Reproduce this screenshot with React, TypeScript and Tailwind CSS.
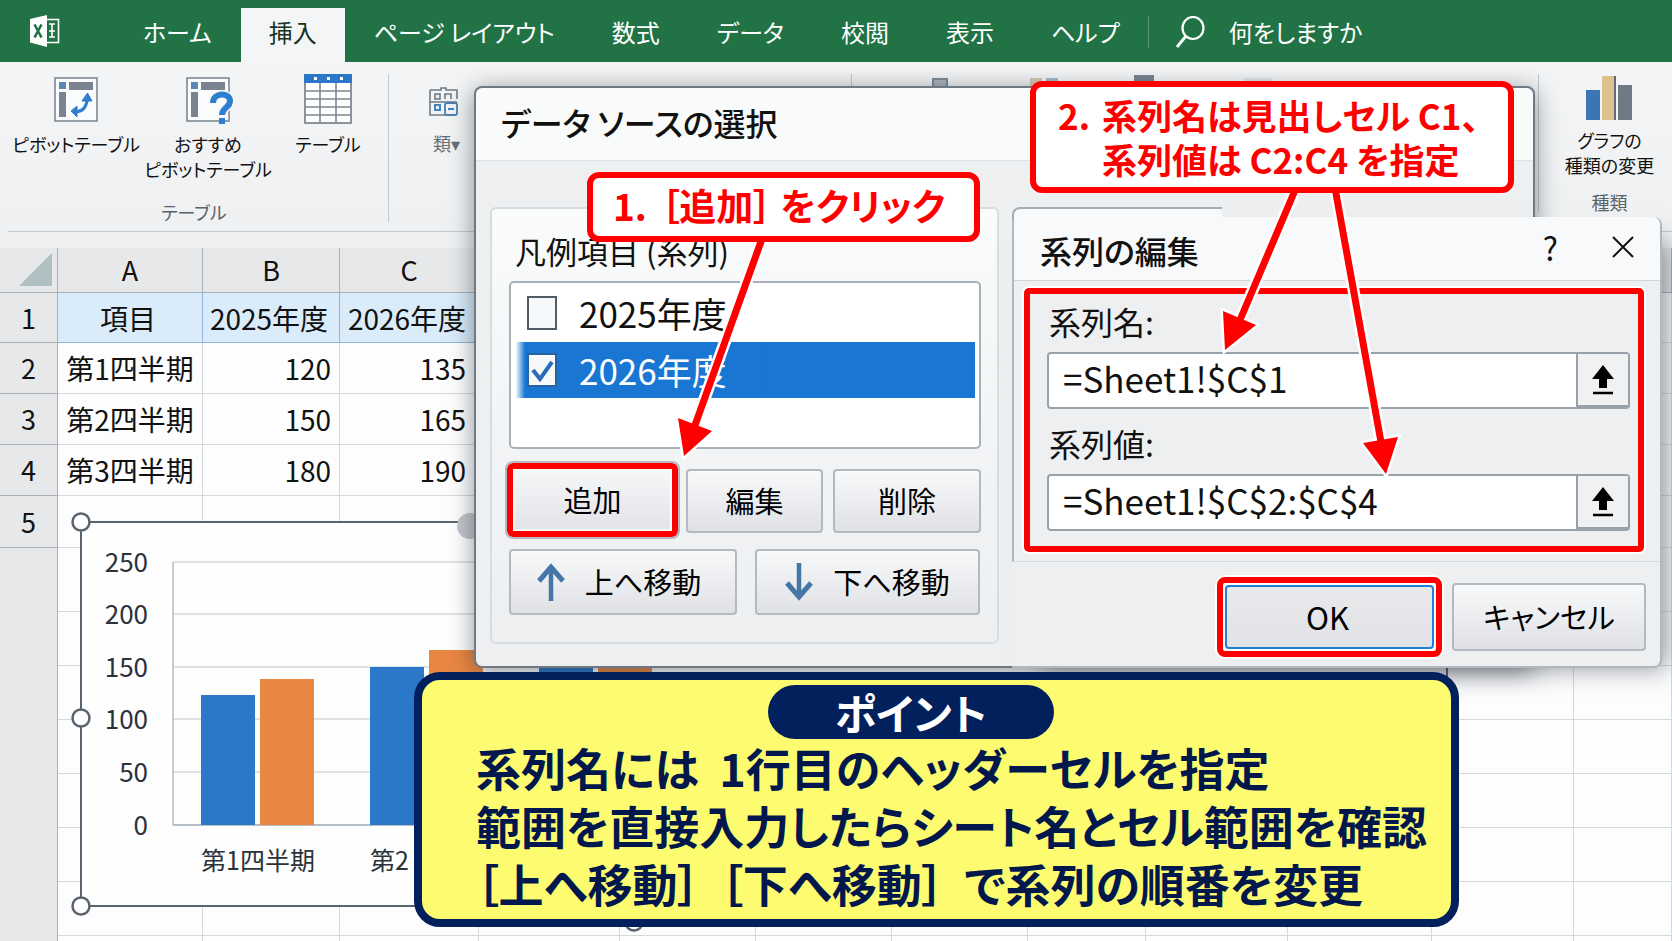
import { clsx } from "clsx";
import type { ReactNode } from "react";

const tabs = [
  "ホーム",
  "挿入",
  "ページ レイアウト",
  "数式",
  "データ",
  "校閲",
  "表示",
  "ヘルプ",
];

const columns = ["A", "B", "C", "", "", "", "", "", "", "", "", ""];

const rows = [
  ["第1四半期", "120", "135"],
  ["第2四半期", "150", "165"],
  ["第3四半期", "180", "190"],
];

const axisTicks = [
  { value: 250, y: 40 },
  { value: 200, y: 92 },
  { value: 150, y: 145 },
  { value: 100, y: 197 },
  { value: 50, y: 250 },
  { value: 0, y: 303 },
];

const clusters = [
  { label: "第1四半期", x: 120, first: 130, second: 146 },
  { label: "第2", x: 289, first: 158, second: 175 },
  { label: "", x: 458, first: 190, second: 200 },
];

function AppLogo() {
  return (
    <svg width="30" height="32" viewBox="0 0 30 32" aria-hidden="true">
      <path d="M16 4.500H28.500V27.500H16" fill="none" stroke="#fff" strokeWidth="1.600" />
      <path d="M19 9h6M19 16h6M19 22h6M22 9v13" stroke="#fff" strokeWidth="1.600" />
      <path d="M0 4L17 0V32L0 27.500Z" fill="#fff" />
      <path d="M4.500 9.500L11.500 22.500M11.500 9.500L4.500 22.500" stroke="#217346" strokeWidth="2.600" />
    </svg>
  );
}

function SearchGlyph() {
  return (
    <svg width="30" height="32" viewBox="0 0 30 32" fill="none" stroke="#fff" aria-hidden="true">
      <ellipse cx="18" cy="12" rx="10.500" ry="11" strokeWidth="2.200" />
      <path d="M11 20L2 31" strokeWidth="2.800" />
    </svg>
  );
}

function PivotFrame({ children }: { children: ReactNode }) {
  return (
    <svg width="52" height="50" viewBox="0 0 52 50" fill="none" aria-hidden="true">
      <rect x="5" y="4" width="42" height="43" fill="#fbfcfd" stroke="#7d8794" strokeWidth="1.600" />
      <rect x="9" y="8" width="7" height="7" fill="#5b86b5" />
      <rect x="19" y="8" width="24" height="8" fill="#7b8290" />
      <rect x="9" y="18" width="7" height="25" fill="#7b8290" />
      {children}
    </svg>
  );
}

function PivotIcon() {
  return (
    <PivotFrame>
      <path d="M25 38C34 37 36 33 37.500 25" stroke="#2f7fd0" strokeWidth="3.200" />
      <path d="M37.500 19L42 27H32ZM21 37L27 32V43Z" fill="#2f7fd0" stroke="#2f7fd0" strokeLinejoin="round" />
    </PivotFrame>
  );
}

function RecommendedPivotIcon() {
  return (
    <PivotFrame>
      <path
        d="M31 29C31 18 48 18 48 27C48 34 40 33 40 41"
        stroke="#f5f6f8"
        strokeWidth="9"
      />
      <path d="M31 29C31 18 48 18 48 27C48 34 40 33 40 41" stroke="#2f7fd0" strokeWidth="6" />
      <rect x="37" y="44" width="6" height="6" fill="#2f7fd0" />
    </PivotFrame>
  );
}

function TableIcon() {
  return (
    <svg width="52" height="50" viewBox="0 0 52 50" aria-hidden="true">
      <rect x="3" y="1" width="46" height="48" fill="#fff" stroke="#6f7b89" strokeWidth="1.600" />
      <path
        d="M3 17h46M3 25h46M3 33h46M3 41h46M18 9v40M34 9v40"
        stroke="#7d8896"
        strokeWidth="1.600"
      />
      <rect x="2" y="0" width="48" height="9" fill="#2b78c8" />
      <path d="M12 4.500h3M25 4.500h3M38 4.500h3" stroke="#fff" strokeWidth="3" />
    </svg>
  );
}

function AddInIcon() {
  return (
    <svg
      width="30"
      height="32"
      viewBox="0 0 30 32"
      fill="none"
      stroke="#6f7b89"
      className="shrink-0"
      aria-hidden="true"
    >
      <path d="M1 4H12V2H17V4H28V13M1 4V29H17M1 16H28" strokeWidth="1.600" />
      <rect x="6" y="8" width="5" height="5" strokeWidth="1.600" />
      <path d="M16 13V8H22V13" strokeWidth="1.600" />
      <rect x="6" y="19" width="5" height="5" stroke="#3e86c6" strokeWidth="2" />
      <rect x="16" y="17" width="12" height="12" rx="2" stroke="#4d7fae" strokeWidth="1.800" />
      <path d="M19 23h6" stroke="#3e86c6" strokeWidth="2" />
    </svg>
  );
}

function ChartTypeIcon() {
  return (
    <svg width="46" height="44" viewBox="0 0 46 44" aria-hidden="true">
      <rect x="0" y="14" width="14" height="30" fill="#3a76b4" />
      <rect x="16" y="0" width="13" height="44" fill="#dfc18f" />
      <rect x="28" y="0" width="2" height="44" fill="#5f6a76" />
      <rect x="32" y="9" width="14" height="35" fill="#6e7a86" />
    </svg>
  );
}

function ArrowGlyph({ down = false }: { down?: boolean }) {
  return (
    <svg width="28" height="38" viewBox="0 0 28 38" fill="none" stroke="#4477a6" aria-hidden="true">
      <path d={down ? "M14 0V34" : "M14 38V4"} strokeWidth="4.500" />
      <path d={down ? "M2 20L14 34L26 20" : "M2 18L14 4L26 18"} strokeWidth="5" />
    </svg>
  );
}

function RibbonItem({
  icon,
  lines,
  className,
}: {
  icon: ReactNode;
  lines: string[];
  className?: string;
}) {
  return (
    <button
      type="button"
      className={clsx("flex flex-col items-center gap-2 whitespace-nowrap leading-[25px]", className)}
    >
      {icon}
      <span>
        {lines.map((line) => (
          <span key={line} className="block">
            {line}
          </span>
        ))}
      </span>
    </button>
  );
}

function Ribbon() {
  return (
    <section className="flex h-[186px] flex-col bg-linear-to-b from-[#f4f5f6] to-[#eef0f1] pb-4 text-[18px] text-[#111]">
      <div className="ml-2 flex flex-1 border-b border-[#c3c8cd] pt-3">
        <div className="flex h-[148px] w-[381px] flex-col border-r border-[#c3c8cd]">
          <div className="flex items-start">
            <RibbonItem icon={<PivotIcon />} lines={["ピボットテーブル"]} className="w-[136px]" />
            <RibbonItem
              icon={<RecommendedPivotIcon />}
              lines={["おすすめ", "ピボットテーブル"]}
              className="w-[128px]"
            />
            <RibbonItem icon={<TableIcon />} lines={["テーブル"]} className="w-[112px]" />
          </div>
          <p className="mt-auto pr-2 text-center leading-5 text-[#5b616a]">テーブル</p>
        </div>
        <div className="flex h-3 flex-1 pl-10">
          <div className="flex w-8 flex-col gap-3 pt-3 text-[#666d76]">
            <AddInIcon />
            <span className="pl-1 whitespace-nowrap">類▾</span>
          </div>
          <div className="ml-[390px] h-16 w-px bg-[#c3c8cd]" />
          <div className="ml-20 mt-1 h-8 w-4 border-2 border-[#7f8b97] bg-[#aab4bd]" />
          <div className="ml-[82px] mt-1 h-8 w-3 bg-[#d6c7b4]" />
          <div className="ml-1 mt-1 h-8 w-3 bg-[#a7b7c4]" />
          <div className="ml-[76px] mt-px h-8 w-5 bg-[#77838f]" />
          <div className="ml-[90px] mt-1 h-8 w-7 bg-[#dfe3e7]" />
        </div>
        <div className="flex h-[138px] w-[134px] flex-col items-center border-l border-[#c3c8cd] pl-2">
          <RibbonItem
            icon={<ChartTypeIcon />}
            lines={["グラフの", "種類の変更"]}
            className="pt-0.5"
          />
          <p className="mt-auto leading-5 text-[#5b616a]">種類</p>
        </div>
      </div>
    </section>
  );
}

function TabBar() {
  return (
    <header className="flex h-[62px] items-end bg-[#217346] text-[24px] text-white">
      <div className="flex h-full w-[115px] items-center pl-[30px]">
        <AppLogo />
      </div>
      <nav className="flex gap-px">
        {tabs.map((tab) => (
          <button
            key={tab}
            type="button"
            className={clsx(
              "h-[54px] whitespace-nowrap px-7 pb-1.5",
              tab === "挿入" && "bg-[#f4f5f6] text-[#17331f]",
            )}
          >
            {tab}
          </button>
        ))}
      </nav>
      <button
        type="button"
        className="mb-3.5 flex h-8 items-center gap-6 whitespace-nowrap border-l border-[#5d9a78] pl-[26px]"
      >
        <SearchGlyph />
        何をしますか
      </button>
    </header>
  );
}

function Sheet() {
  const headCell = "border-b border-r border-[#a9b0b8] bg-[#e6e8ea] text-[27px] font-normal";
  const cell = "border-b border-r border-[#d5d9de]";

  return (
    <table className="w-full table-fixed border-separate border-spacing-0 bg-[#fdfdfe] text-[28px] leading-9 text-[#111]">
      <colgroup>
        <col className="w-[58px]" />
        <col className="w-[145px]" />
        <col className="w-[137px]" />
        <col className="w-[139px]" />
        <col className="w-[141px]" />
        <col className="w-[136px]" />
        <col className="w-[136px]" />
        <col className="w-[136px]" />
        <col className="w-[118px]" />
        <col className="w-[142px]" />
        <col className="w-[144px]" />
        <col className="w-[142px]" />
        <col />
      </colgroup>
      <thead>
        <tr className="h-[45px]">
          <th className={headCell}>
            <svg width="34" height="34" viewBox="0 0 34 34" className="ml-auto mr-1" aria-hidden="true">
              <path d="M33 0V33H0Z" fill="#b0bfc1" />
            </svg>
          </th>
          {columns.map((name, i) => (
            <th key={i} scope="col" className={headCell}>
              {name}
            </th>
          ))}
        </tr>
      </thead>
      <tbody>
        <tr className="h-[50px]">
          <th scope="row" className={headCell}>
            1
          </th>
          {["項目", "2025年度", "2026年度"].map((name) => (
            <td
              key={name}
              className="border-b border-r border-[#8fb4da] bg-[#daebf9] pr-1 text-center whitespace-nowrap"
            >
              {name}
            </td>
          ))}
          {columns.slice(3).map((_, i) => (
            <td key={i} className={cell} />
          ))}
        </tr>
        {rows.map(([label, previous, current], i) => (
          <tr key={label} className="h-[51px]">
            <th scope="row" className={headCell}>
              {i + 2}
            </th>
            <td className={clsx(cell, "whitespace-nowrap text-center")}>{label}</td>
            <td className={clsx(cell, "pr-2 text-right")}>{previous}</td>
            <td className={clsx(cell, "pr-3 text-right")}>{current}</td>
            {columns.slice(3).map((_, j) => (
              <td key={j} className={cell} />
            ))}
          </tr>
        ))}
        <tr className="h-[52px]">
          <th scope="row" className={headCell}>
            5
          </th>
          {columns.map((_, i) => (
            <td key={i} className={cell} />
          ))}
        </tr>
        <tr className="h-[64px]">
          <th className="border-r border-[#a9b0b8] bg-[#e6e8ea]" />
          {columns.map((_, i) => (
            <td key={i} className={cell} />
          ))}
        </tr>
        {[7, 8, 9, 10, 11, 12, 13].map((row) => (
          <tr key={row} className="h-[54px]">
            <th className="border-r border-[#a9b0b8] bg-[#e6e8ea]" />
            {columns.map((_, i) => (
              <td key={i} className={cell} />
            ))}
          </tr>
        ))}
      </tbody>
    </table>
  );
}

function EmbeddedChart() {
  return (
    <svg
      width="1370"
      height="420"
      viewBox="0 0 1370 420"
      className="absolute left-[81px] top-[522px] overflow-visible text-[26px]"
      fill="#2b323c"
      role="img"
      aria-label="四半期別の集合縦棒グラフ"
    >
      <rect x="0" y="0" width="1366" height="384" fill="#fefefe" stroke="#5a646f" strokeWidth="2" />
      {axisTicks.map((tick) => (
        <g key={tick.value}>
          <path
            d={`M92 ${tick.y}H1340`}
            stroke={tick.value === 0 ? "#b4bcc6" : "#d3d8de"}
            strokeWidth={tick.value === 0 ? 2 : 1.5}
          />
          <text x="67" y={tick.y + 10} textAnchor="end">
            {tick.value}
          </text>
        </g>
      ))}
      <path d="M92 40V303" stroke="#b4bcc6" strokeWidth="1.500" />
      {clusters.map((c) => (
        <g key={c.x}>
          <rect x={c.x} y={303 - c.first} width="54" height={c.first} fill="#2b78c8" />
          <rect x={c.x + 59} y={303 - c.second} width="54" height={c.second} fill="#ea8643" />
          <text x={c.x} y="348" fontSize="25">
            {c.label}
          </text>
        </g>
      ))}
      <circle cx="389" cy="4" r="13" fill="#c3c7cc" />
      <g fill="#fff" stroke="#5a646f" strokeWidth="2.500">
        <circle cx="0" cy="0" r="8.500" />
        <circle cx="0" cy="196" r="8.500" />
        <circle cx="0" cy="384" r="8.500" />
        <circle cx="553" cy="400" r="8.500" />
      </g>
    </svg>
  );
}

const dialogButton =
  "rounded-[4px] border-2 border-[#b3b9c0] bg-linear-to-b from-[#f8f9fa] to-[#dfe1e5] text-[29px] text-black";

function SelectDataDialog() {
  return (
    <section
      role="dialog"
      aria-label="データ ソースの選択"
      className="absolute left-[474px] top-[86px] flex h-[582px] w-[1061px] flex-col rounded-[8px] border-2 border-[#6f7983] bg-[#eeeff1] shadow-[0_4px_24px_rgba(30,40,50,0.5)]"
    >
      <h2 className="flex h-[73px] items-center rounded-t-[8px] border-b border-[#dfe2e5] bg-[#f9fafa] pb-1 pl-[25px] text-[32px] font-medium">
        データ ソースの選択
      </h2>
      <div className="ml-3.5 mt-[46px] h-[437px] w-[509px] rounded-[6px] border-2 border-[#dadde0] bg-linear-to-b from-[#fafbfb] via-[#f3f4f5] to-[#eeeff1] pt-[22px] pr-4 pl-[17px]">
        <h3 className="pl-1.5 text-[31px] leading-10">凡例項目 (系列)</h3>
        <ul className="mt-2.5 h-[168px] rounded-[5px] border-2 border-[#a9b0b8] bg-white pr-1 text-[35px] leading-[56px]">
          {["2025年度", "2026年度"].map((year, i) => (
            <li
              key={year}
              className={clsx(
                "flex items-center",
                i === 0 && "h-[59px]",
                i === 1 &&
                  "h-[56px] bg-linear-to-r from-[#1977d3]/0 from-1% via-[#1977d3] via-3% to-[#1977d3] text-white",
              )}
            >
              <label className="flex items-center gap-[22px] pl-4">
                <span className="relative flex">
                  <input
                    type="checkbox"
                    defaultChecked={i === 1}
                    className="peer h-[34px] w-[30px] appearance-none border-2 border-[#525c67] bg-[#f7f8f9] checked:border-[#2a62a0]"
                  />
                  <svg
                    viewBox="0 0 30 34"
                    className="pointer-events-none absolute inset-0 hidden peer-checked:block"
                    fill="none"
                    aria-hidden="true"
                  >
                    <path d="M6 17L13 26L25 9" stroke="#2a6db8" strokeWidth="4" />
                  </svg>
                </span>
                {year}
              </label>
            </li>
          ))}
        </ul>
        <div className="mt-5 flex">
          <button
            type="button"
            className={clsx(
              dialogButton,
              "-ml-1 -mt-2 h-[78px] w-[175px] border-0 shadow-[inset_0_0_0_6px_#fe0000,inset_0_0_0_8px_#fff]",
              "rounded-[8px]",
            )}
          >
            追加
          </button>
          <button type="button" className={clsx(dialogButton, "ml-1.5 h-[64px] w-[137px]")}>
            編集
          </button>
          <button type="button" className={clsx(dialogButton, "ml-2.5 h-[64px] w-[148px]")}>
            削除
          </button>
        </div>
        <div className="mt-2.5 flex gap-[18px]">
          <button
            type="button"
            className={clsx(
              dialogButton,
              "flex h-[66px] w-[228px] items-center justify-center gap-5 pr-2",
            )}
          >
            <ArrowGlyph />
            上へ移動
          </button>
          <button
            type="button"
            className={clsx(
              dialogButton,
              "flex h-[66px] w-[225px] items-center justify-center gap-5",
            )}
          >
            <ArrowGlyph down />
            下へ移動
          </button>
        </div>
      </div>
    </section>
  );
}

function RangeField({ id, label, value }: { id: string; label: string; value: string }) {
  return (
    <div>
      <label htmlFor={id} className="block pb-1 pl-0.5 text-[32px] leading-[53px]">
        {label}
      </label>
      <div className="flex h-[57px] rounded-[4px] border-2 border-[#98a1aa] bg-white">
        <input
          id={id}
          type="text"
          defaultValue={value}
          className="min-w-0 flex-1 bg-transparent pb-1 pl-3.5 text-[35px] outline-none"
        />
        <button
          type="button"
          aria-label={`${label} セル範囲を選択`}
          className="flex w-[52px] items-center justify-center border-l-2 border-b-2 border-[#98a1aa] bg-[#f0f1f3]"
        >
          <svg width="22" height="30" viewBox="0 0 22 30" aria-hidden="true">
            <path d="M11 0L22 14H15V23H7V14H0Z" />
            <path d="M1 28h20" stroke="#000" strokeWidth="2.500" />
          </svg>
        </button>
      </div>
    </div>
  );
}

function EditSeriesDialog() {
  return (
    <section
      role="dialog"
      aria-label="系列の編集"
      className="absolute left-[1012px] top-[217px] flex h-[451px] w-[650px] flex-col rounded-r-[8px] border-r-2 border-b-2 border-[#b0b7be] bg-[#eeeff1] shadow-[16px_12px_24px_-12px_rgba(30,40,50,0.5)]"
    >
      <div className="absolute -top-2.5 left-0 h-3 w-[210px] rounded-tl-[8px] border-l-2 border-t-2 border-[#a4acb4] bg-[#f8f9fa]" />
      <div className="flex h-[345px] flex-col border-b border-l-2 border-b-[#d7dadd] border-l-[#b0b7be]">
        <div className="flex h-[64px] items-center rounded-tr-[8px] border-b border-[#d0d5d9] bg-[#f8f9fa] pr-[26px] pb-1 pl-[26px]">
          <h2 className="flex-1 pt-1.5 text-[32px] font-medium">系列の編集</h2>
          <button type="button" className="mr-[54px] text-[32px]">
            ?
          </button>
          <button type="button" aria-label="閉じる">
            <svg width="22" height="24" viewBox="0 0 22 24" stroke="#111" strokeWidth="2" aria-hidden="true">
              <path d="M1 2L21 22M21 2L1 22" />
            </svg>
          </button>
        </div>
        <div className="mx-2.5 mr-4 mt-[7px] flex h-[264px] flex-col gap-2 rounded-[5px] border-6 border-[#fe0000] pt-px pr-2 pl-[17px] shadow-[0_0_0_2px_#fff]">
          <RangeField id="series-name" label="系列名:" value="=Sheet1!$C$1" />
          <RangeField id="series-values" label="系列値:" value="=Sheet1!$C$2:$C$4" />
        </div>
      </div>
      <div className="mt-[15px] flex items-center justify-end gap-2.5 pr-3.5">
        <div className="rounded-[8px] border-6 border-[#fe0000] bg-white p-0.5 shadow-[0_0_0_2px_#fff]">
          <button
            type="button"
            className="block h-[64px] w-[209px] rounded-[4px] border-2 border-[#2180d3] bg-linear-to-b from-[#e8e9eb] to-[#e2e3e6] pr-1 text-[31px] text-black"
          >
            OK
          </button>
        </div>
        <button type="button" className={clsx(dialogButton, "h-[68px] w-[194px]")}>
          キャンセル
        </button>
      </div>
    </section>
  );
}

function CalloutArrow({ shaft, head }: { shaft: string; head: string }) {
  return (
    <g>
      <path d={shaft} stroke="#fff" strokeWidth="12" />
      <path d={head} fill="#fff" stroke="#fff" strokeWidth="5" />
      <path d={shaft} stroke="#fe0000" strokeWidth="7" />
      <path d={head} fill="#fe0000" />
    </g>
  );
}

function Callouts() {
  const box =
    "absolute rounded-[12px] border-6 border-[#fe0000] bg-white font-bold whitespace-nowrap text-[#fe0000]";

  return (
    <>
      <svg
        width="1672"
        height="941"
        viewBox="0 0 1672 941"
        className="pointer-events-none absolute left-0 top-0"
        aria-hidden="true"
      >
        <CalloutArrow shaft="M763 236L694 428" head="M678 418L712 431L684 456Z" />
        <CalloutArrow shaft="M1296 188L1240 320" head="M1223 311L1256 325L1225 350Z" />
        <CalloutArrow shaft="M1335 188L1381 442" head="M1363 443L1398 437L1386 474Z" />
      </svg>
      <p
        className={clsx(
          box,
          "left-[587px] top-[172px] flex w-[393px] gap-3.5 pt-0.5 pb-1.5 pl-[20px] text-[37px] leading-[50px]",
        )}
      >
        <span>1.</span>
        <span>［追加］ をクリック</span>
      </p>
      <div
        className={clsx(
          box,
          "left-[1030px] top-[81px] flex w-[484px] gap-3 py-1.5 pl-[22px] text-[35px] leading-[44px]",
        )}
      >
        <span>2.</span>
        <p>
          系列名は見出しセル C1、
          <br />
          系列値は C2:C4 を指定
        </p>
      </div>
    </>
  );
}

function PointBox() {
  return (
    <aside className="absolute left-[414px] top-[672px] w-[1045px] rounded-[26px] border-8 border-[#02205c] bg-[#fdfc70] px-[54px] pt-[5px] pb-[6px] text-[#02184c]">
      <h2 className="ml-[292px] w-[286px] rounded-full bg-[#02205c] text-center text-[42px] leading-[54px] font-bold text-white">
        ポイント
      </h2>
      <p className="text-[45px] leading-[58px] font-bold whitespace-nowrap">
        系列名には&nbsp; 1行目のヘッダーセルを指定
        <br />
        範囲を直接入力したらシート名とセル範囲を確認
        <br />
        ［上へ移動］&nbsp; ［下へ移動］&nbsp; で系列の順番を変更
      </p>
    </aside>
  );
}

export default function App() {
  return (
    <main
      lang="ja"
      className="relative h-screen overflow-hidden bg-[#fdfdfe] font-['Noto_Sans_CJK_JP',sans-serif] text-[#111] [font-feature-settings:'palt']"
    >
      <TabBar />
      <Ribbon />
      <Sheet />
      <EmbeddedChart />
      <SelectDataDialog />
      <EditSeriesDialog />
      <PointBox />
      <Callouts />
    </main>
  );
}
